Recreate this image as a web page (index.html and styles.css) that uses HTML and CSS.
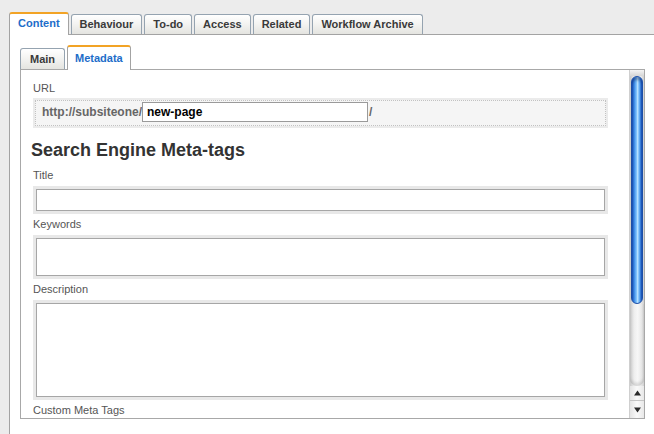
FILE: index.html
```html
<!DOCTYPE html>
<html>
<head>
<meta charset="utf-8">
<link rel="stylesheet" href="styles.css">
</head>
<body>
<div class="page">
  <ul class="tabs outer-tabs">
    <li class="tab active">Content</li>
    <li class="tab">Behaviour</li>
    <li class="tab">To-do</li>
    <li class="tab">Access</li>
    <li class="tab">Related</li>
    <li class="tab">Workflow Archive</li>
  </ul>
  <div class="outer-panel">
    <ul class="tabs inner-tabs">
      <li class="tab">Main</li>
      <li class="tab active">Metadata</li>
    </ul>
    <div class="inner-panel">
      <div class="form">
        <div class="label">URL</div>
        <div class="url-box">
          <div class="url-inner">
            <span class="url-prefix">http://subsiteone/</span>
            <input class="url-input" type="text" value="new-page">
            <span class="url-suffix">/</span>
          </div>
        </div>
        <h2 class="heading">Search Engine Meta-tags</h2>
        <div class="label">Title</div>
        <div class="field"><input class="text-input" type="text"></div>
        <div class="label">Keywords</div>
        <div class="field"><textarea class="area area-keywords"></textarea></div>
        <div class="label">Description</div>
        <div class="field"><textarea class="area area-description"></textarea></div>
        <div class="label label-last">Custom Meta Tags</div>
      </div>
      <div class="scrollbar">
        <div class="sb-cap"></div>
        <div class="sb-thumb"></div>
        <div class="sb-track"></div>
        <div class="sb-btn sb-up"><svg width="7" height="6" viewBox="0 0 7 6"><path d="M3.5 0.5 L7 5.5 L0 5.5 Z" fill="#2b2b2b"/></svg></div>
        <div class="sb-btn sb-down"><svg width="7" height="6" viewBox="0 0 7 6"><path d="M0 0.5 L7 0.5 L3.5 5.5 Z" fill="#2b2b2b"/></svg></div>
      </div>
    </div>
  </div>
</div>
</body>
</html>
```
FILE: styles.css
```css
* { box-sizing: border-box; }
html, body {
  margin: 0;
  padding: 0;
  background: #ececec;
  font-family: "Liberation Sans", Arial, Helvetica, sans-serif;
  overflow: hidden;
}
.page {
  width: 654px;
  height: 434px;
  padding: 12px 0 0 9px;
  display: flex;
  flex-direction: column;
}
.tabs {
  list-style: none;
  margin: 0;
  display: flex;
  align-items: flex-end;
  border-bottom: 1px solid #a3a3a3;
}
.outer-tabs {
  padding: 0;
  height: 23px;
}
.tab {
  position: relative;
  border: 1px solid #95a3b0;
  border-bottom: none;
  border-radius: 3px 3px 0 0;
  background: linear-gradient(to bottom, #ffffff 0%, #f4f4f2 45%, #e4e4e0 100%);
  font-size: 11px;
  font-weight: bold;
  color: #3a3a3a;
  padding: 0 8px;
  margin-right: 2px;
  white-space: nowrap;
}
.outer-tabs .tab {
  height: 20px;
  line-height: 19px;
}
.outer-tabs .tab.active {
  height: 23px;
  margin-bottom: -1px;
  margin-right: 2px;
  padding: 0 8px;
}
.tab.active {
  background: #ffffff;
  border-color: #a3a3a3;
  border-top: 2px solid #f2a325;
  color: #1d6dc9;
}
.outer-panel {
  flex: 1;
  background: #ffffff;
  border-left: 1px solid #a3a3a3;
  padding: 0 9px 0 10px;
}
.inner-tabs {
  padding: 11px 0 0 0;
  height: 35px;
  border-bottom-color: #a8a8a8;
}
.inner-tabs .tab {
  height: 21px;
  line-height: 20px;
  padding: 0 9px;
  margin-right: 2px;
}
.inner-tabs .tab.active {
  height: 25px;
  margin-bottom: -1px;
  line-height: 22px;
  padding: 0 7px;
}
.inner-panel {
  height: 349px;
  border: 1px solid #a8a8a8;
  border-top: none;
  display: flex;
  overflow: hidden;
}
.form {
  flex: 1;
  padding: 12px 21px 0 12px;
  overflow: hidden;
}
.label {
  font-size: 11px;
  line-height: 13px;
  color: #555555;
  margin-bottom: 4px;
}
.label:first-child { margin-bottom: 3px; }
.url-box {
  background: #ebebeb;
  padding: 2px;
}
.url-inner {
  border: 1px dotted #c2c2c2;
  background: #f5f5f5;
  padding: 1px 4px 3px 6px;
  display: flex;
  align-items: center;
  height: 26px;
}
.url-prefix, .url-suffix {
  font-size: 12px;
  font-weight: bold;
  color: #666666;
}
.url-suffix { margin-left: 1px; }
.url-input {
  width: 226px;
  height: 20px;
  margin: 0;
  border: 1px solid #9a9a9a;
  background: #ffffff;
  padding: 0 4px;
  font-family: inherit;
  font-size: 12px;
  font-weight: bold;
  color: #000000;
  outline: none;
}
.heading {
  margin: 11px 0 8px -2px;
  font-size: 18px;
  line-height: 22px;
  font-weight: bold;
  color: #333333;
}
.field {
  background: #e8e8e8;
  padding: 3px;
  margin-bottom: 4px;
}
.text-input, .area {
  display: block;
  width: 100%;
  margin: 0;
  border: 1px solid #a6a6a6;
  background: #ffffff;
  padding: 2px 4px;
  font-family: inherit;
  font-size: 12px;
  outline: none;
  resize: none;
}
.text-input { height: 22px; }
.area-keywords { height: 38px; }
.area-description { height: 94px; }
.label-last { margin-bottom: 0; }
.scrollbar {
  width: 15px;
  display: flex;
  flex-direction: column;
  border-left: 1px solid #cfcfcf;
  background: linear-gradient(to right, #c9c9c9 0%, #ececec 30%, #f6f6f6 55%, #e2e2e2 85%, #cfcfcf 100%);
}
.sb-cap {
  height: 6px;
  background: linear-gradient(to bottom, #f4f4f4, #d6d6d6);
}
.sb-thumb {
  height: 228px;
  margin: 0 1px 0 1px;
  border-radius: 7px;
  border: 1px solid #1c4fa8;
  background: linear-gradient(to right, #1a55c0 0%, #3b8ae8 22%, #7fc2fb 45%, #b5e0ff 55%, #6db4f6 72%, #2c72d8 90%, #1a55c0 100%);
  box-shadow: inset 0 3px 3px rgba(0,0,40,0.35);
}
.sb-track {
  height: 82px;
  border-radius: 0 0 7px 7px;
  background: linear-gradient(to right, #cccccc 0%, #eeeeee 30%, #f7f7f7 55%, #e6e6e6 85%, #d0d0d0 100%);
  box-shadow: inset 0 -3px 3px rgba(0,0,0,0.12);
}
.sb-btn {
  display: flex;
  align-items: center;
  justify-content: center;
  background: linear-gradient(to right, #e4e4e4, #fafafa 50%, #e8e8e8);
}
.sb-up {
  height: 15px;
  border-bottom: 1px solid #c4c4c4;
}
.sb-down {
  height: 17px;
}
```
